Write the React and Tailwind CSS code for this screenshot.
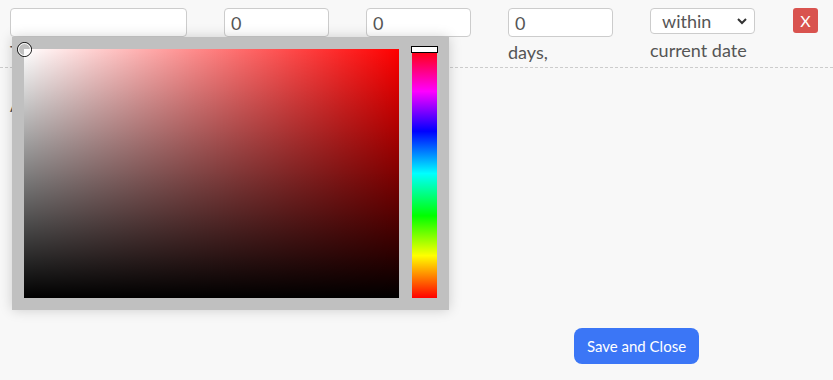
import React from "react";

function Field({ width, value, label }) {
  return (
    <div className="flex flex-col" style={{ width }}>
      <input
        readOnly
        value={value}
        className="h-[29px] w-full rounded-[4px] border border-[#cccccc] bg-white px-[6px] text-[18px] text-[#555] outline-none"
      />
      <span className="mt-[4px] text-[18px] leading-[22px] text-[#555]">
        {label}
      </span>
    </div>
  );
}

function ColorPicker() {
  return (
    <div className="absolute left-[12px] top-[37px] flex gap-[13px] bg-[#c0c0c0] p-[12px] shadow-[0_0_12px_rgba(0,0,0,0.18)]">
      <div
        className="relative h-[249px] w-[375px]"
        style={{ background: "#ff0000" }}
      >
        <div className="absolute inset-0 bg-gradient-to-r from-white to-transparent" />
        <div className="absolute inset-0 bg-gradient-to-b from-transparent to-black" />
        <div className="absolute left-[-7px] top-[-7px] h-[15px] w-[15px] rounded-full border-[1.5px] border-black">
          <div className="h-full w-full rounded-full border-[1.5px] border-white" />
        </div>
      </div>
      <div
        className="relative h-[249px] w-[25px]"
        style={{
          background:
            "linear-gradient(to bottom, #ff0000 0%, #ff00ff 17%, #0000ff 33%, #00ffff 50%, #00ff00 67%, #ffff00 83%, #ff0000 100%)",
        }}
      >
        <div className="absolute left-[-1px] top-[-3px] h-[7px] w-[27px] border-[1.5px] border-black bg-white" />
      </div>
    </div>
  );
}

export default function App() {
  return (
    <div
      className="relative h-[380px] w-[833px] bg-[#f8f8f8] text-[#555]"
      style={{ fontFamily: "Lato, 'Liberation Sans', sans-serif" }}
    >
      <div className="flex gap-[37px] px-[10px] pt-[8px]">
        <Field width={177} value="" label="To" />
        <Field width={105} value="0" label="years," />
        <Field width={105} value="0" label="months," />
        <Field width={105} value="0" label="days," />
        <div className="flex w-[105px] flex-col">
          <div className="flex h-[26px] items-center justify-between rounded-[4px] border border-[#cccccc] bg-white pl-[11px] pr-[6px] text-[18px] text-[#555]">
            <span>within</span>
            <svg width="12" height="12" viewBox="0 0 12 12">
              <path
                d="M2 4 L6 8 L10 4"
                fill="none"
                stroke="#333"
                strokeWidth="2"
              />
            </svg>
          </div>
          <span className="mt-[5px] text-[18px] leading-[22px] text-[#555]">
            current date
          </span>
        </div>
        <div className="ml-[1px] flex h-[25px] w-[25px] items-center justify-center rounded-[3px] bg-[#d9534f] text-[16px] text-white">
          X
        </div>
      </div>

      <div className="mt-[4px] border-t border-dashed border-[#cccccc]" />

      <div className="px-[10px] pt-[24px] text-[18px]">Add</div>

      <div className="mt-[209px] flex pl-[574px]">
        <button
          type="button"
          className="h-[36px] w-[125px] rounded-[8px] bg-[#3b76f6] text-[15px] text-white"
        >
          Save and Close
        </button>
      </div>

      <ColorPicker />
    </div>
  );
}
